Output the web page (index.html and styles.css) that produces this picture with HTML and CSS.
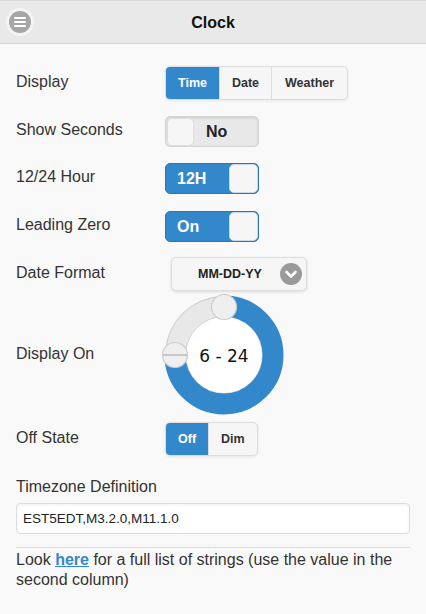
FILE: index.html
```html
<!DOCTYPE html>
<html>
<head>
<meta charset="utf-8">
<link rel="stylesheet" href="styles.css">
</head>
<body>
<header class="header">
  <span class="menu-btn">
    <svg width="28" height="28" viewBox="0 0 28 28">
      <circle cx="14" cy="14" r="12.5" fill="#a6a6a6" stroke="#f4f4f4" stroke-width="3"/>
      <rect x="8" y="9" width="12" height="2" rx="1" fill="#fff"/>
      <rect x="8" y="13" width="12" height="2" rx="1" fill="#fff"/>
      <rect x="8" y="17" width="12" height="2" rx="1" fill="#fff"/>
    </svg>
  </span>
  <h1 class="title">Clock</h1>
</header>
<main class="content">
  <div class="row r1">
    <span class="label">Display</span>
    <div class="seg">
      <span class="seg-item active">Time</span>
      <span class="seg-item">Date</span>
      <span class="seg-item wide">Weather</span>
    </div>
  </div>
  <div class="row r2">
    <span class="label">Show Seconds</span>
    <div class="flip off">
      <span class="knob"></span>
      <span class="flip-text">No</span>
    </div>
  </div>
  <div class="row r3">
    <span class="label">12/24 Hour</span>
    <div class="flip on">
      <span class="flip-text">12H</span>
      <span class="knob"></span>
    </div>
  </div>
  <div class="row r4">
    <span class="label">Leading Zero</span>
    <div class="flip on">
      <span class="flip-text">On</span>
      <span class="knob"></span>
    </div>
  </div>
  <div class="row r5">
    <span class="label">Date Format</span>
    <div class="select">
      <span class="select-text">MM-DD-YY</span>
      <svg class="select-icon" width="22" height="22" viewBox="0 0 22 22">
        <circle cx="11" cy="11" r="11" fill="#9a9a9a"/>
        <polyline points="6.5,9 11,13.5 15.5,9" fill="none" stroke="#fff" stroke-width="2.6" stroke-linecap="round" stroke-linejoin="round"/>
      </svg>
    </div>
  </div>
  <div class="row r6">
    <span class="label">Display On</span>
    <svg class="dial" width="118" height="118" viewBox="0 0 118 118">
      <circle cx="59" cy="59" r="49" fill="none" stroke="#e8e8e8" stroke-width="20"/>
      <circle cx="59" cy="59" r="58.5" fill="none" stroke="#cfcfcf" stroke-width="1"/>
      <circle cx="59" cy="59" r="38.5" fill="#ffffff" stroke="#cfcfcf" stroke-width="1"/>
      <path d="M59 10 A49 49 0 1 1 10 59" fill="none" stroke="#3388cc" stroke-width="21"/>
      <circle cx="59" cy="11" r="12.5" fill="#efefef" stroke="#cccccc" stroke-width="1.2"/>
      <circle cx="10" cy="59" r="12.5" fill="#efefef" stroke="#cccccc" stroke-width="1.2"/>
      <line x1="-2" y1="59" x2="22" y2="59" stroke="#a0a0a0" stroke-width="1"/>
      <text x="59" y="60" class="dial-text" text-anchor="middle" dominant-baseline="central">6 - 24</text>
    </svg>
  </div>
  <div class="row r7">
    <span class="label">Off State</span>
    <div class="seg">
      <span class="seg-item active">Off</span>
      <span class="seg-item">Dim</span>
    </div>
  </div>
  <div class="tz-label">Timezone Definition</div>
  <div class="input">EST5EDT,M3.2.0,M11.1.0</div>
  <hr class="rule">
  <p class="note">Look <a class="link" href="#">here</a> for a full list of strings (use the value in the second column)</p>
</main>
</body>
</html>
```
FILE: styles.css
```css
html, body {
  margin: 0;
  padding: 0;
}
body {
  background: #f9f9f9;
  font-family: "Liberation Sans", Arial, sans-serif;
  color: #333;
  width: 426px;
  height: 614px;
  overflow: hidden;
}
.header {
  background: #e9e9e9;
  border-top: 1px solid #dcdcdc;
  border-bottom: 1px solid #d6d6d6;
  box-sizing: border-box;
  height: 44px;
  display: flex;
  align-items: center;
  justify-content: center;
  position: relative;
}
.menu-btn {
  position: absolute;
  left: 6px;
  top: 7px;
  width: 28px;
  height: 28px;
  display: block;
}
.menu-btn svg {
  display: block;
}
.title {
  margin: 0;
  font-size: 16px;
  font-weight: bold;
  color: #111;
  padding-top: 1px;
}
.content {
  padding: 22px 16px 0 16px;
}
.row {
  display: flex;
  align-items: center;
}
.label {
  width: 149px;
  flex: none;
  font-size: 16px;
  color: #333;
  padding-bottom: 3px;
}
.r1 { height: 34px; margin-bottom: 16px; }
.r2 { height: 31px; margin-bottom: 16px; }
.r3 { height: 31px; margin-bottom: 17px; }
.r4 { height: 31px; margin-bottom: 15px; }
.r5 { height: 34px; margin-bottom: 5px; }
.r6 { height: 118px; margin-bottom: 8px; }
.r7 { height: 34px; margin-bottom: 0; }

.seg {
  display: flex;
  height: 34px;
  border: 1px solid #dddddd;
  border-radius: 5px;
  box-sizing: border-box;
  overflow: hidden;
  background: #f6f6f6;
  box-shadow: 0 1px 3px rgba(0,0,0,0.08);
}
.seg-item {
  display: flex;
  align-items: center;
  padding: 0 12px;
  font-size: 12.5px;
  font-weight: bold;
  color: #333;
  border-left: 1px solid #dddddd;
}
.seg-item.wide {
  padding: 0 12.5px 0 13px;
}
.seg-item:first-child {
  border-left: none;
}
.seg-item.active {
  background: #3388cc;
  color: #fff;
  margin: -1px 0 -1px -1px;
  padding-left: 13px;
  border-radius: 5px 0 0 5px;
}

.flip {
  width: 94px;
  height: 31px;
  box-sizing: border-box;
  border-radius: 5px;
  display: flex;
  align-items: center;
  position: relative;
}
.flip.off {
  background: #e8e8e8;
  border: 1px solid #d4d4d4;
  box-shadow: inset 0 1px 3px rgba(0,0,0,0.12);
}
.flip.on {
  background: #3388cc;
  border: 1px solid #2a77b5;
  justify-content: space-between;
}
.knob {
  width: 28px;
  height: 28px;
  box-sizing: border-box;
  background: #f6f6f6;
  border: 1px solid #dedede;
  border-radius: 5px;
  flex: none;
}
.flip.off .knob {
  margin-left: 1px;
  width: 27px;
}
.flip.on .knob {
  width: 29px;
  height: 29px;
  background: #f6f6f6;
  border-color: #c9d9e8;
}
.flip-text {
  font-size: 16px;
  font-weight: bold;
}
.flip.off .flip-text {
  color: #222;
  margin-left: 12px;
}
.flip.on .flip-text {
  color: #fff;
  margin-left: 11px;
}

.select {
  margin-left: 6px;
  width: 136px;
  height: 34px;
  box-sizing: border-box;
  background: #f6f6f6;
  border: 1px solid #dddddd;
  border-radius: 5px;
  box-shadow: 0 1px 3px rgba(0,0,0,0.12);
  display: flex;
  align-items: center;
  position: relative;
}
.select-text {
  font-size: 12.5px;
  font-weight: bold;
  color: #222;
  margin-left: 26px;
}
.select-icon {
  position: absolute;
  right: 4px;
  top: 5px;
  display: block;
}

.dial {
  overflow: visible;
  display: block;
}
.dial-text {
  font-family: "DejaVu Sans", Verdana, sans-serif;
  font-size: 17px;
  fill: #111;
}

.tz-label {
  margin-top: 22px;
  font-size: 16px;
  line-height: 18px;
  color: #333;
}
.input {
  margin-top: 7px;
  height: 31px;
  box-sizing: border-box;
  background: #fff;
  border: 1px solid #dddddd;
  border-radius: 4px;
  box-shadow: inset 0 1px 3px rgba(0,0,0,0.06);
  font-size: 13.5px;
  color: #222;
  padding-left: 6px;
  display: flex;
  align-items: center;
}
.rule {
  margin: 13px 0 0 0;
  border: none;
  border-top: 1px solid #dcdcdc;
  height: 0;
}
.note {
  margin: 2px 0 0 0;
  font-size: 16px;
  line-height: 20px;
  color: #333;
}
.link {
  color: #3388cc;
  font-weight: bold;
  text-decoration: underline;
}
```
